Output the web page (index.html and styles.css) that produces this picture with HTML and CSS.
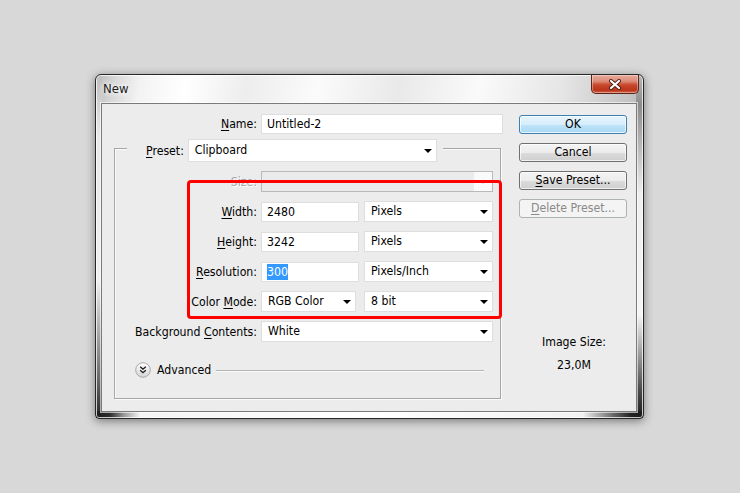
FILE: index.html
```html
<!DOCTYPE html>
<html>
<head>
<meta charset="utf-8">
<title>New</title>
<link rel="stylesheet" href="styles.css">
</head>
<body>
<div class="window">
  <div class="titlebar">
    <span class="title">New</span>
    <div class="close">
      <svg width="14" height="11" viewBox="0 0 14 11">
        <path d="M3 2 L11 9 M11 2 L3 9" stroke="#4a2018" stroke-width="4" stroke-linecap="round"/>
        <path d="M3 2 L11 9 M11 2 L3 9" stroke="#fff" stroke-width="2.2" stroke-linecap="round"/>
      </svg>
    </div>
  </div>
  <div class="client">
    <div class="main">
      <div class="name-row">
        <span class="lbl"><u>N</u>ame:</span>
        <div class="field name-field">Untitled-2</div>
      </div>
      <div class="group">
        <div class="legend">
          <span class="legend-lbl"><u>P</u>reset:</span>
          <div class="field select preset">Clipboard<i class="arrow"></i></div>
        </div>
        <div class="rows">
          <span class="lbl disabled">Size:</span>
          <div class="ctl"><div class="field select size-select"><span class="disabled-btn"><i class="arrow light"></i></span></div></div>

          <span class="lbl"><u>W</u>idth:</span>
          <div class="ctl"><div class="field num">2480</div><div class="field select unit">Pixels<i class="arrow"></i></div></div>

          <span class="lbl"><u>H</u>eight:</span>
          <div class="ctl"><div class="field num">3242</div><div class="field select unit">Pixels<i class="arrow"></i></div></div>

          <span class="lbl"><u>R</u>esolution:</span>
          <div class="ctl"><div class="field num"><span class="sel">300</span></div><div class="field select unit">Pixels/Inch<i class="arrow"></i></div></div>

          <span class="lbl">Color <u>M</u>ode:</span>
          <div class="ctl"><div class="field select mode">RGB Color<i class="arrow"></i></div><div class="field select unit bits">8 bit<i class="arrow"></i></div></div>

          <span class="lbl">Background <u>C</u>ontents:</span>
          <div class="ctl"><div class="field select wide">White<i class="arrow"></i></div></div>
        </div>
        <div class="advanced">
          <svg class="adv-icon" width="16" height="16" viewBox="0 0 16 16">
            <defs>
              <linearGradient id="g" x1="0" y1="0" x2="0" y2="1">
                <stop offset="0" stop-color="#ffffff"/>
                <stop offset="1" stop-color="#d4d4d4"/>
              </linearGradient>
            </defs>
            <circle cx="8" cy="8" r="7.3" fill="url(#g)" stroke="#a8a8a8" stroke-width="1"/>
            <path d="M5.2 4.8 L8 7.2 L10.8 4.8 M5.2 8.3 L8 10.7 L10.8 8.3" fill="none" stroke="#1e1e1e" stroke-width="1.4"/>
          </svg>
          <span class="adv-text">Advanced</span>
          <span class="adv-line"></span>
        </div>
      </div>
    </div>
    <div class="side">
      <div class="btn ok">OK</div>
      <div class="btn">Cancel</div>
      <div class="btn"><u>S</u>ave Preset...</div>
      <div class="btn disabled-b"><u>D</u>elete Preset...</div>
      <div class="info">
        <div>Image Size:</div>
        <div class="info-val">23,0M</div>
      </div>
    </div>
  </div>
  <div class="highlight"></div>
</div>
</body>
</html>
```

FILE: styles.css
```css
* { box-sizing: border-box; }

html, body { margin: 0; }

body {
  background: #d8d8d8;
  padding: 74px 0 0 95px;
  font-family: "DejaVu Sans Condensed", "DejaVu Sans", sans-serif;
  font-stretch: condensed;
  font-size: 12.2px;
  color: #000;
  height: 493px;
  overflow: hidden;
}

u { text-decoration: underline; text-underline-offset: 2px; }

.window {
  position: relative;
  width: 549px;
  height: 345px;
  border: 1px solid #262626;
  border-radius: 6px 6px 4px 4px;
  padding: 0 6px 6px 5px;
  display: flex;
  flex-direction: column;
  box-shadow: 0 2px 10px rgba(0,0,0,0.45), inset 0 0 0 1px rgba(255,255,255,0.75);
  background:
    linear-gradient(to right, #1c1c1c 0, #2e2e2e 14px, #9a9a9a 28px, #f4f4f4 44px, #ffffff 50%, #f2f2f2 calc(100% - 60px), #6a6a6a calc(100% - 30px), #222 calc(100% - 12px), #1c1c1c 100%) left bottom / 100% 7px no-repeat,
    linear-gradient(to bottom, #bdbdbd 0, #e9e9e9 60px, #f0f0f0 60%, #6c6c6c 88%, #262626 100%) left top / 6px 100% no-repeat,
    linear-gradient(to bottom, #b8b8b8 0, #8c8c8c 30px, #efefef 120px, #f5f5f5 70%, #4a4a4a 92%, #1e1e1e 100%) right top / 7px 100% no-repeat,
    linear-gradient(100deg, #b9b9b9 0, #d9d9d9 20px, #f3f3f3 45px, #ffffff 90px, #ededed 150px, #fbfbfb 220px, #e9e9e9 300px, #fafafa 380px, #e6e6e6 460px, #c9c9c9 520px, #9d9d9d 100%);
}

.titlebar {
  height: 28px;
  display: flex;
  align-items: flex-start;
  justify-content: space-between;
  margin-right: -2px;
}

.title {
  margin: 7px 0 0 2px;
  line-height: 14px;
  font-size: 13px;
  color: #1b1b1b;
  text-shadow: 0 0 4px #fff, 0 0 6px #fff;
}

.close {
  width: 48px;
  height: 19px;
  border: 1px solid #5c2318;
  border-top: none;
  border-radius: 0 0 5px 5px;
  background: linear-gradient(to bottom, #e9ab9c 0, #dc8b76 35%, #c9472c 55%, #bb3519 85%, #d46a50 100%);
  box-shadow: inset 0 0 0 1px rgba(255,255,255,0.35);
  display: flex;
  align-items: center;
  justify-content: center;
}

.client {
  flex: 1;
  border: 1px solid #7a7a7a;
  background: #ececec;
  display: flex;
  box-shadow: 0 0 0 1px rgba(255,255,255,0.6);
}

.main {
  width: 417px;
  padding-top: 10px;
}

.name-row {
  display: flex;
  align-items: center;
  height: 20px;
}

.name-row .lbl {
  width: 155px;
}

.lbl {
  text-align: right;
  white-space: nowrap;
  line-height: 14px;
}

.lbl.disabled {
  color: #a9a9a9;
  text-shadow: 1px 1px 0 #fff;
}

.field {
  background: #fff;
  border: 1px solid #dedede;
  height: 21px;
  line-height: 19px;
  padding-left: 5px;
  white-space: nowrap;
  position: relative;
}

.name-field {
  margin-left: 4px;
  width: 242px;
  height: 20px;
  line-height: 18px;
}

.select {
  display: flex;
  align-items: center;
  justify-content: space-between;
  padding-left: 6px;
  padding-right: 4px;
}

.arrow {
  display: block;
  width: 0;
  height: 0;
  border-left: 4px solid transparent;
  border-right: 4px solid transparent;
  border-top: 4px solid #000;
  margin-top: 1px;
}

.arrow.light { border-top-color: #c4c4c4; }

.group {
  margin: 14px 0 0 12px;
  width: 387px;
  border: 1px solid #a6a6a6;
  box-shadow: inset 1px 1px 0 #fafafa, 1px 1px 0 #fafafa;
  padding-bottom: 20px;
}

.legend {
  margin: -10px 0 0 12px;
  padding: 0 6px 0 19px;
  background: #ececec;
  width: fit-content;
  display: flex;
  align-items: center;
}

.legend-lbl {
  margin-right: 4px;
}

.preset {
  width: 249px;
  height: 23px;
  padding-left: 6px;
}

.rows {
  margin-top: 9px;
  display: grid;
  grid-template-columns: 142px auto;
  grid-auto-rows: 21px;
  column-gap: 4px;
  row-gap: 9px;
  align-items: center;
}

.ctl {
  display: flex;
  align-items: center;
  gap: 5px;
}

.num {
  width: 98px;
  height: 20px;
  line-height: 18px;
  padding-left: 5px;
}

.sel {
  background: #3399ff;
  color: #fff;
  padding: 1px 0;
  line-height: 15px;
}

.unit { width: 129px; }

.mode { width: 95px; margin-right: 3px; }

.wide { width: 232px; }

.size-select {
  width: 232px;
  height: 21px;
  background: #ebebeb;
  border-color: #b9b9b9;
  justify-content: flex-end;
  padding: 0;
}

.disabled-btn {
  width: 18px;
  height: 19px;
  background: #fafafa;
  display: flex;
  align-items: center;
  justify-content: center;
}

.advanced {
  margin-top: 20px;
  padding-left: 20px;
  display: flex;
  align-items: center;
  height: 16px;
}

.adv-text {
  margin-left: 6px;
}

.adv-line {
  flex: 1;
  height: 2px;
  margin: 1px 16px 0 5px;
  border-top: 1px solid #b4b4b4;
  border-bottom: 1px solid #fbfbfb;
}

.side {
  width: 108px;
  margin-left: 0;
  padding-top: 11px;
  display: flex;
  flex-direction: column;
  gap: 9px;
}

.btn {
  height: 19px;
  border: 1px solid #707070;
  border-radius: 3px;
  background: linear-gradient(to bottom, #f4f4f4 0, #ececec 50%, #dcdcdc 51%, #cfcfcf 100%);
  box-shadow: inset 0 0 0 1px rgba(255,255,255,0.7);
  text-align: center;
  line-height: 17px;
  white-space: nowrap;
}

.btn.ok {
  border-color: #3c7fb1;
  background: linear-gradient(to bottom, #e6f4fc 0, #d6eefb 50%, #bfe4f8 51%, #a9d9f4 100%);
}

.btn.disabled-b {
  border-color: #adb2b5;
  background: #f4f4f4;
  color: #8a8a8a;
  box-shadow: none;
}

.info {
  margin-top: 108px;
  text-align: center;
  line-height: 14px;
  padding-left: 2px;
}

.info-val {
  margin-top: 9px;
}

.highlight {
  position: absolute;
  left: 91px;
  top: 105px;
  width: 315px;
  height: 139px;
  border: 3px solid #ff0000;
  border-radius: 4px;
  pointer-events: none;
}
```
